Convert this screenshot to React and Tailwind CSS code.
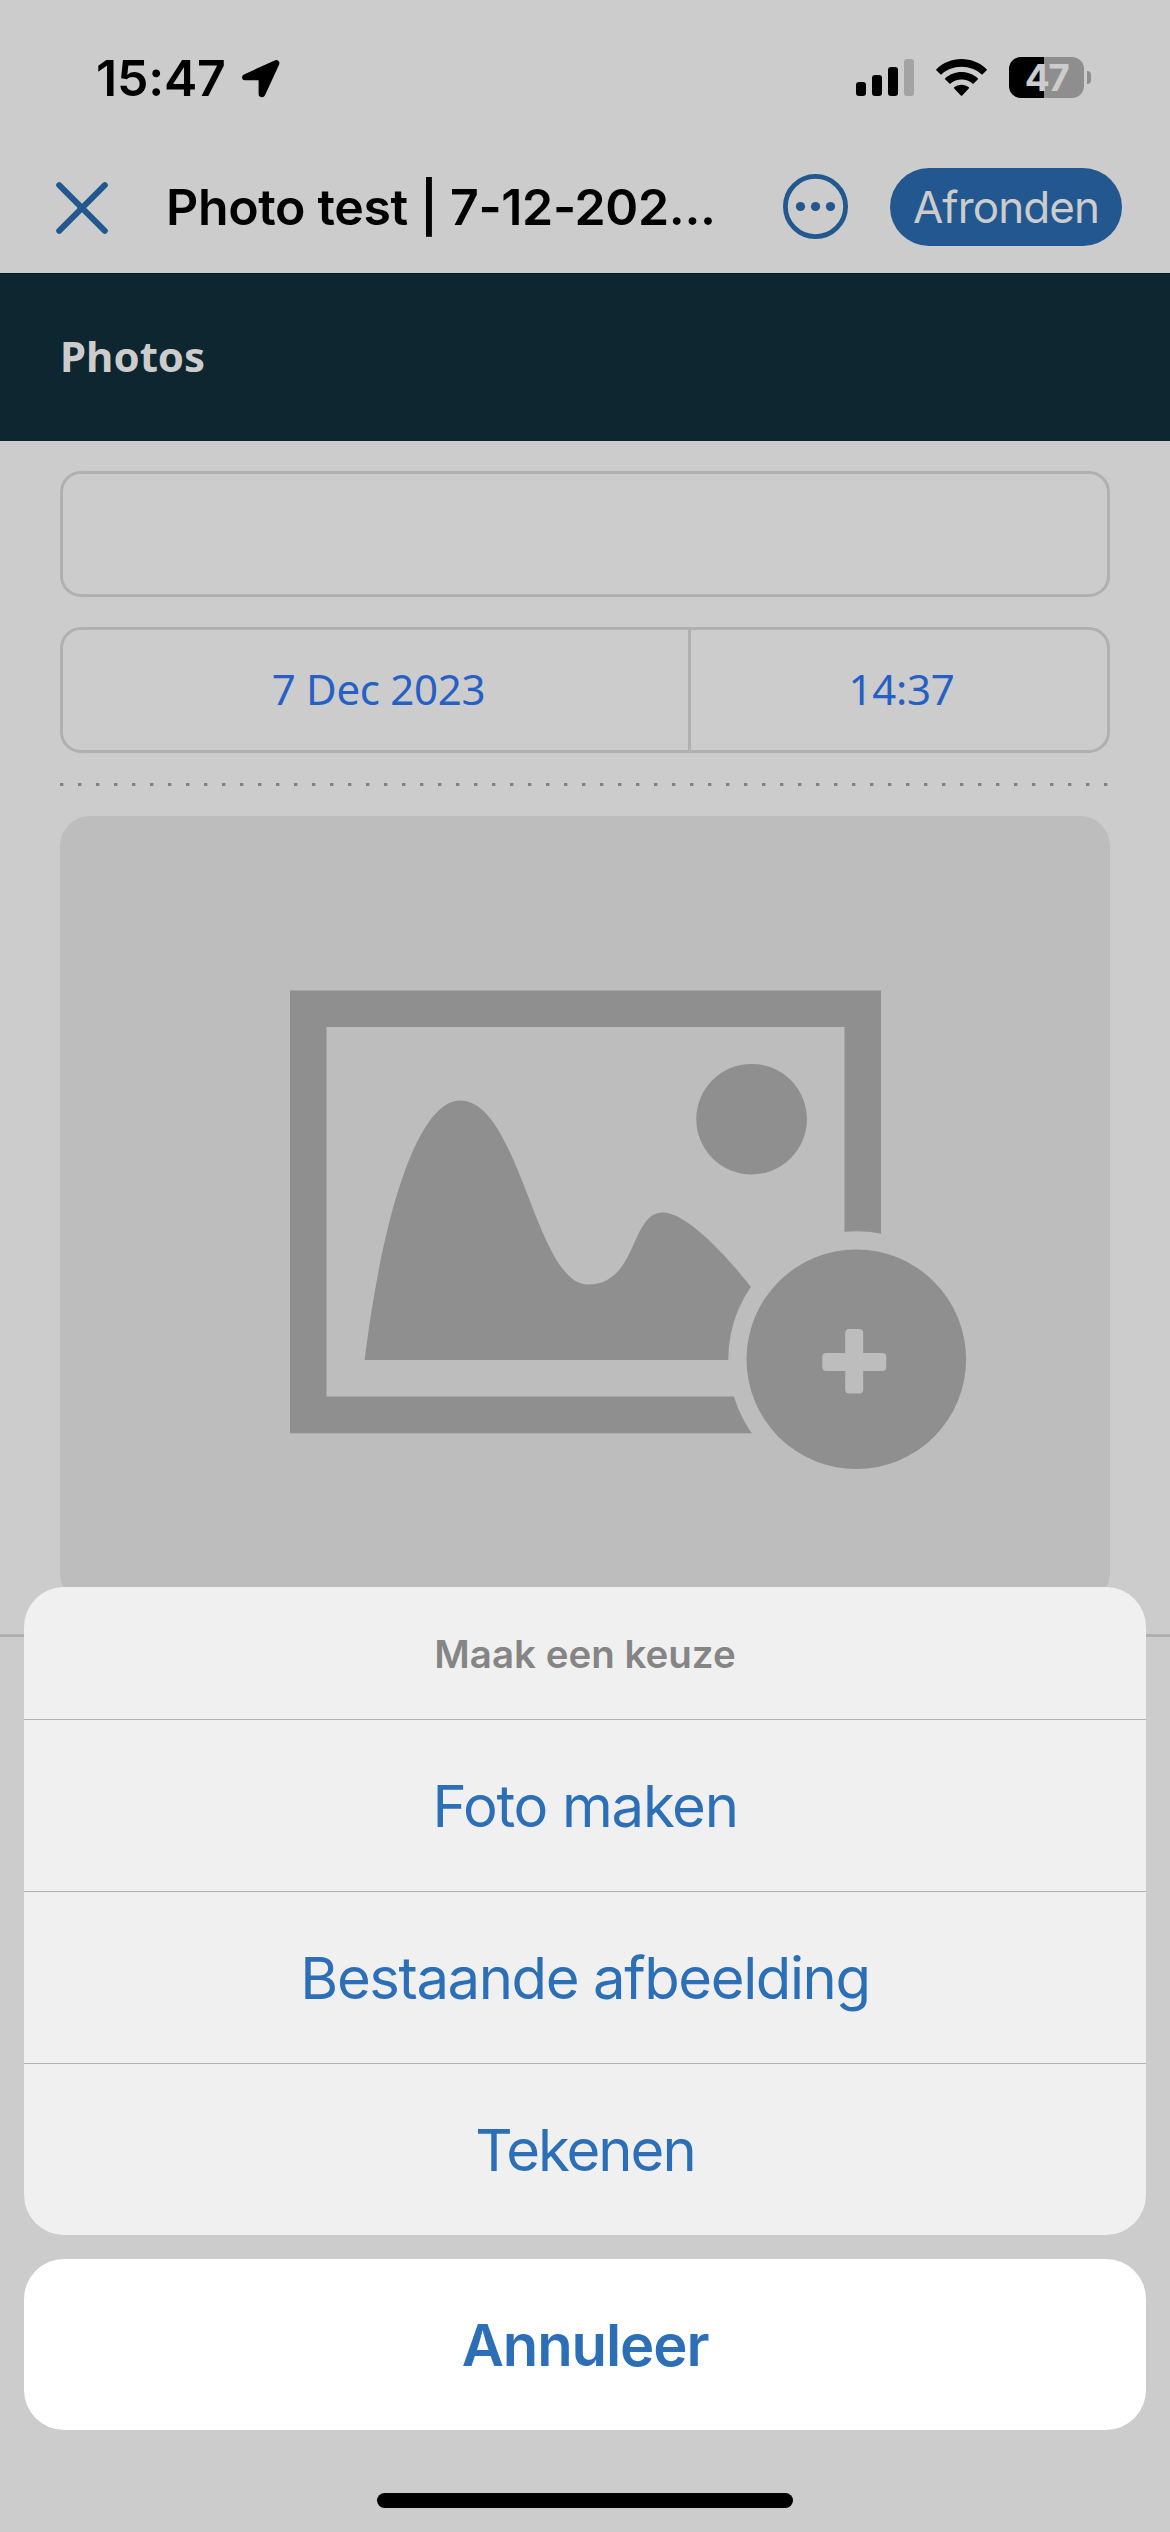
import React from 'react';

const StatusBar = () => {
  return (
    <div className="flex items-start justify-between h-[148px] pl-[96px] pr-[79px]">
      <div className="flex items-start pt-[48px]">
        <span className="text-[50px] leading-[60px] font-semibold tracking-[-0.2px] w-[145px] whitespace-nowrap">15:47</span>
        <svg className="mt-[11px] w-[39px] h-[39px]" viewBox="0 0 39 39">
          <path
            d="M34.5 3.2 3.8 17.2C2.6 17.8 2.8 19.2 4 19.2H19.6V34.8C19.6 36.6 21.6 36.8 22.3 35.2L36.2 5C36.8 3.6 35.8 2.6 34.5 3.2Z"
            fill="#000"
            stroke="#000"
            strokeWidth="4"
            strokeLinejoin="round"
          />
        </svg>
      </div>

      <div className="flex items-start pt-[57px]">
        <svg className="mt-[2px] w-[58px] h-[37px]" viewBox="0 0 58 37">
          <rect x="0" y="23" width="10" height="14" rx="3" />
          <rect x="16" y="16" width="10" height="21" rx="3" />
          <rect x="32" y="8" width="10" height="29" rx="3" />
          <rect x="48" y="0" width="10" height="37" rx="3" fill="#a3a3a3" />
        </svg>
        <svg className="mt-[2px] ml-[22px] w-[51px] h-[37px]" viewBox="0 0 51 37">
          <path d="M25.5 0C35.2 0 44 3.8 50.4 9.9C51 10.5 51 11 50.5 11.5L46.6 15.3C46.2 15.7 45.8 15.7 45.4 15.3C40.2 10.6 33.3 7.8 25.5 7.8C17.7 7.8 10.8 10.6 5.6 15.3C5.2 15.7 4.8 15.7 4.4 15.3L.5 11.5C0 11 0 10.5 .6 9.9C7 3.8 15.8 0 25.5 0Z" />
          <path d="M25.5 13C31.7 13 37.5 15.4 41.7 19.2C42.1 19.6 42.1 20 41.7 20.4L37.6 24.4C37.2 24.8 36.8 24.8 36.4 24.4C33.5 21.9 29.7 20.4 25.5 20.4C21.3 20.4 17.5 21.9 14.6 24.4C14.2 24.8 13.8 24.8 13.4 24.4L9.3 20.4C8.9 20 8.9 19.6 9.3 19.2C13.5 15.4 19.3 13 25.5 13Z" />
          <path d="M25.5 25.7C28.3 25.7 30.9 26.7 32.8 28.3C33.2 28.7 33.2 29.1 32.8 29.5L26.2 36.5C25.8 36.9 25.2 36.9 24.8 36.5L18.2 29.5C17.8 29.1 17.8 28.7 18.2 28.3C20.1 26.7 22.7 25.7 25.5 25.7Z" />
        </svg>
        <div className="ml-[22px] flex items-center justify-center w-[75px] h-[41px] rounded-[12px] bg-linear-to-r from-black from-[35px] to-[#8e8e8e] to-[35px]">
          <span className="text-[37px] leading-[41px] font-bold tracking-[-1.5px] text-[#cccccc]">47</span>
        </div>
        <div className="mt-[14px] ml-[3px] w-[4px] h-[13px] rounded-r-full bg-[#8e8e8e]" />
      </div>
    </div>
  );
};

const NavBar = () => {
  return (
    <div className="flex items-start h-[125px] pl-[56px] pr-[48px]">
      <svg className="mt-[34px] w-[52px] h-[52px]" viewBox="0 0 52 52" stroke="#235790" strokeWidth="6" strokeLinecap="round">
        <path d="M3.2 3.2 48.8 48.8M48.8 3.2 3.2 48.8" />
      </svg>
      <h1 className="mt-[29px] ml-[58px] w-[580px] text-[50px] leading-[60px] font-semibold tracking-[-0.35px] whitespace-nowrap">
        Photo test | 7-12-202...
      </h1>
      <svg className="mt-[26px] ml-[36px] w-[66px] h-[66px]" viewBox="0 0 66 66" fill="#235790">
        <circle cx="33.5" cy="32.5" r="30.1" fill="none" stroke="#235790" strokeWidth="4.8" />
        <circle cx="18.5" cy="32.5" r="4.6" />
        <circle cx="33.5" cy="32.5" r="4.6" />
        <circle cx="48.5" cy="32.5" r="4.6" />
      </svg>
      <button className="mt-[20px] ml-auto w-[232px] h-[78px] rounded-full bg-[#235790] text-[#cccccc] text-[44px] leading-[78px] tracking-[-0.9px] whitespace-nowrap">
        Afronden
      </button>
    </div>
  );
};

const PhotoPlaceholder = () => {
  return (
    <div className="mt-[30px] h-[787px] rounded-[30px] bg-[#bdbdbd]">
      <svg className="w-[1050px] h-[787px]" viewBox="60 816 1050 787" fill="#8f8f8f">
        <path fillRule="evenodd" d="M290 990.4H881V1433.3H290ZM326.5 1027V1396.4H844.5V1027Z" />
        <circle cx="751.6" cy="1119.2" r="55.3" />
        <path d="M364.6 1360C384 1205 420 1100.5 460 1100.5C520 1100.5 535 1284.5 588 1284.5C638 1284.5 630 1212.5 662.5 1212.5C685 1212.5 722 1250 751 1287V1360Z" />
        <circle cx="856.3" cy="1359.3" r="128" fill="#bdbdbd" />
        <circle cx="856.3" cy="1359.3" r="109.8" />
        <rect x="822.3" y="1353" width="64" height="18" rx="4" fill="#bdbdbd" />
        <rect x="845.2" y="1329" width="18" height="64.4" rx="4" fill="#bdbdbd" />
      </svg>
    </div>
  );
};

const options = [
  { label: 'Foto maken', className: 'tracking-[-1.3px]' },
  { label: 'Bestaande afbeelding', className: 'tracking-[-1.4px]' },
  { label: 'Tekenen', className: 'tracking-[-2px]' },
];

const ActionSheet = () => {
  return (
    <div className="absolute inset-x-0 bottom-0 px-6 pb-6 text-[#2d6fb7]">
      <div className="overflow-hidden rounded-[40px] bg-[#f0f0f0]">
        <p className="h-[132px] text-center text-[38.5px] leading-[134px] font-semibold text-[#858585]">Maak een keuze</p>
        {options.map((option) => (
          <button
            key={option.label}
            className={`block w-full h-[172px] border-t border-[#b2b2b2] text-[58px] leading-[172px] ${option.className}`}
          >
            {option.label}
          </button>
        ))}
      </div>
      <button className="block mt-6 w-full h-[171px] rounded-[40px] bg-white text-[58px] leading-[172px] font-semibold tracking-[-1.1px]">
        Annuleer
      </button>
      <div className="mx-auto mt-[63px] w-[416px] h-[15px] rounded-full bg-black" />
    </div>
  );
};

const App = () => {
  return (
    <div className="relative w-[1170px] h-[2532px] overflow-hidden bg-[#cccccc] text-black font-['Inter',sans-serif]">
      <StatusBar />
      <NavBar />

      <div className="h-[168px] px-[60px] border-t border-[#021c25] bg-[#0d262f]">
        <h2 className="text-[42px] leading-[164px] font-bold text-[#cccccc] font-['Noto_Sans',sans-serif]">Photos</h2>
      </div>

      <div className="px-[60px] pt-[30px] pb-[31px] border-b-3 border-[#b0b0b0] font-['Noto_Sans',sans-serif]">
        <div className="h-[126px] rounded-[21px] border-3 border-[#b0b0b0]" />
        <div className="flex mt-[30px] h-[126px] rounded-[21px] border-3 border-[#b0b0b0] text-[42px] leading-[118px] tracking-[-0.3px] text-center text-[#2760c5]">
          <div className="w-[628px] pl-[6px] border-r-3 border-[#b0b0b0]">7 Dec 2023</div>
          <div className="flex-1 pl-[5px]">14:37</div>
        </div>
        <div className="mt-[30px] h-[3px] bg-[repeating-linear-gradient(90deg,#808080_0_3px,#b0b0b0_3px_4px,transparent_4px_18px)]" />
        <PhotoPlaceholder />
      </div>

      <ActionSheet />
    </div>
  );
};

export default App;
